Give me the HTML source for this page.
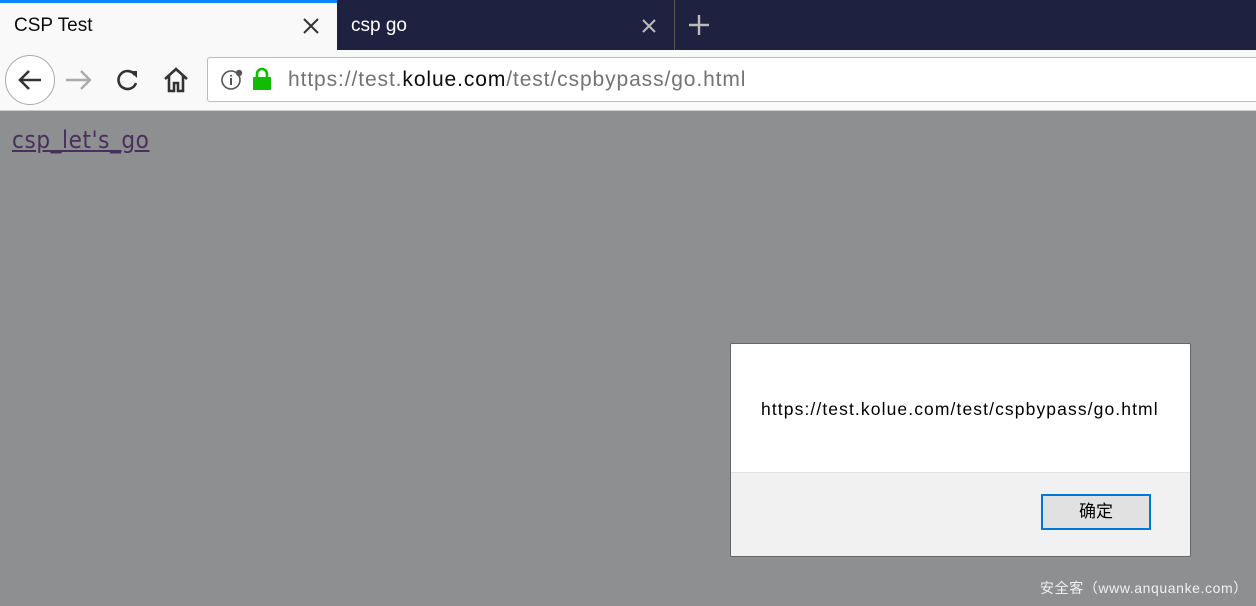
<!DOCTYPE html>
<html><head><meta charset="utf-8"><style>
*{margin:0;padding:0;box-sizing:border-box}
body{width:1256px;height:606px;overflow:hidden;background:#8e8f91;font-family:"Liberation Sans","Noto Sans CJK SC",sans-serif;position:relative}
.abs{position:absolute}
</style></head><body>
<div class="abs" style="left:0;top:0;width:1256px;height:50px;background:#1f2140"></div>
<div class="abs" style="left:0;top:0;width:337px;height:50px;background:#f9f9fa"></div>
<div class="abs" style="left:0;top:0;width:337px;height:3px;background:#0a84ff"></div>
<div class="abs" style="left:14px;top:15px;font-size:19px;color:#0c0c0d">CSP Test</div>
<svg class="abs" style="left:302px;top:17px" width="18" height="18"><path d="M2 2L16 16M16 2L2 16" stroke="#333" stroke-width="2"/></svg>
<div class="abs" style="left:351px;top:15px;font-size:19px;color:#fff">csp go</div>
<svg class="abs" style="left:641px;top:18px" width="16" height="16"><path d="M2 2L14 14M14 2L2 14" stroke="#bbb" stroke-width="2"/></svg>
<div class="abs" style="left:674px;top:0;width:1px;height:50px;background:#555"></div>
<svg class="abs" style="left:688px;top:14px" width="22" height="22"><path d="M11 1V21M1 11H21" stroke="#bbb" stroke-width="2.4"/></svg>
<div class="abs" style="left:0;top:50px;width:1256px;height:61px;background:#f9f9fa;border-bottom:1px solid #ccc"></div>
<div class="abs" style="left:5px;top:55px;width:50px;height:50px;border-radius:50%;background:#fff;border:1px solid #aaa"></div>
<svg class="abs" style="left:15px;top:65px" width="30" height="30"><path d="M26 15H5M14 6L5 15L14 24" stroke="#333" stroke-width="2.6" fill="none"/></svg>
<svg class="abs" style="left:64px;top:67px" width="30" height="26"><path d="M2 13H26M17 4L26 13L17 22" stroke="#aaa" stroke-width="2.4" fill="none"/></svg>
<svg class="abs" style="left:115px;top:67px" width="26" height="26"><path d="M20 8A9 9 0 1 0 21 16" stroke="#333" stroke-width="2.6" fill="none"/><path d="M15 4L22 4L22 11Z" fill="#333"/></svg>
<svg class="abs" style="left:162px;top:66px" width="28" height="28"><path d="M3 13L14 3L25 13M7 10V25H12V17H16V25H21V10" stroke="#333" stroke-width="2.6" fill="none"/></svg>
<div class="abs" style="left:207px;top:57px;width:1060px;height:45px;background:#fff;border:1px solid #bbb;border-radius:3px"></div>
<svg class="abs" style="left:220px;top:69px" width="24" height="22"><circle cx="11" cy="11" r="9" stroke="#555" stroke-width="1.6" fill="none"/><path d="M11 9V16M11 6V7.5" stroke="#555" stroke-width="2"/><circle cx="19" cy="4" r="3.2" fill="#555"/></svg>
<svg class="abs" style="left:252px;top:67px" width="20" height="24"><path d="M5 11V7A5 5 0 0 1 15 7V11" stroke="#12bc00" stroke-width="2.6" fill="none"/><rect x="1" y="10" width="18" height="13" rx="1" fill="#12bc00"/></svg>
<div class="abs" style="left:288px;top:68px;font-size:21px;letter-spacing:0.9px;color:#737373;white-space:nowrap">https://test.<span style="color:#0c0c0d">kolue.com</span>/test/cspbypass/go.html</div>
<a class="abs" style="left:12px;top:126px;font-size:24px;letter-spacing:0.6px;color:#48305c;text-decoration:underline;font-family:'DejaVu Sans Condensed','Liberation Sans',sans-serif">csp_let's_go</a>
<div class="abs" style="left:730px;top:343px;width:461px;height:214px;background:#f1f1f1;border:1px solid #666;border-radius:2px;overflow:hidden">
<div style="height:129px;background:#fff;border-bottom:1px solid #e3e3e3"></div>
<div class="abs" style="left:30px;top:55px;font-size:17.5px;letter-spacing:1.1px;color:#000;white-space:nowrap">https://test.kolue.com/test/cspbypass/go.html</div>
<div class="abs" style="left:310px;top:150px;width:110px;height:36px;background:#e1e1e1;border:2px solid #0078d7;text-align:center;line-height:32px;font-size:17px;color:#000">确定</div>
</div>
<div class="abs" style="left:1040px;top:578px;font-size:14px;letter-spacing:0.6px;color:#f0f0f0;white-space:nowrap">安全客（www.anquanke.com）</div>
</body></html>
